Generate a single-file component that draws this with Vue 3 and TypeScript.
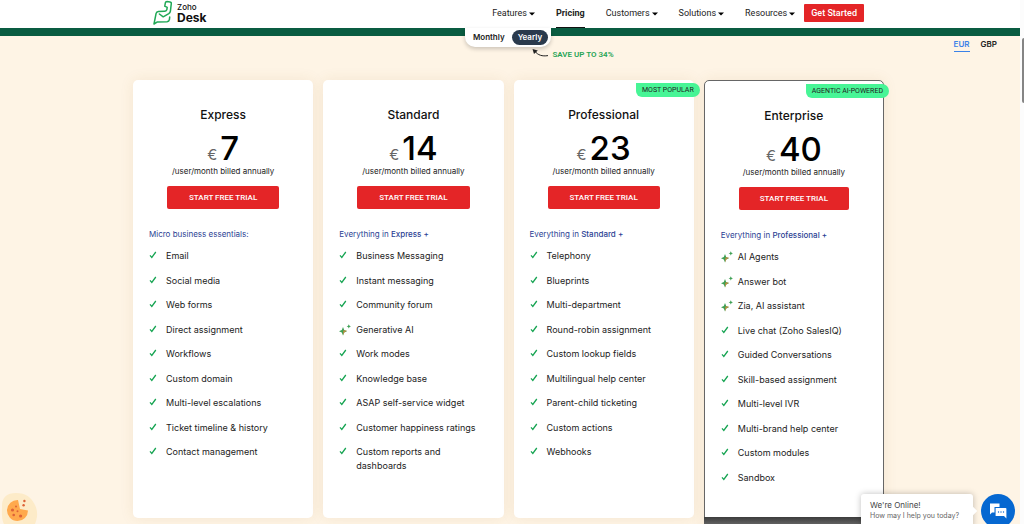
<script setup lang="ts">
import { ref } from 'vue'

interface Feature {
  label: string
  ai?: boolean
}

interface Plan {
  name: string
  price: Record<Currency, number>
  intro: string
  base?: string
  badge?: string
  highlighted?: boolean
  features: Feature[]
}

type Currency = 'EUR' | 'GBP'
type Billing = 'Monthly' | 'Yearly'

const currencies: Currency[] = ['EUR', 'GBP']
const billings: Billing[] = ['Monthly', 'Yearly']
const currency = ref<Currency>('EUR')
const billing = ref<Billing>('Yearly')

const links = [
  { label: 'Features', menu: true },
  { label: 'Pricing', menu: false },
  { label: 'Customers', menu: true },
  { label: 'Solutions', menu: true },
  { label: 'Resources', menu: true },
]

const list = (...labels: string[]): Feature[] => labels.map((label) => ({ label }))

const plans: Plan[] = [
  {
    name: 'Express',
    price: { EUR: 7, GBP: 6 },
    intro: 'Micro business essentials:',
    features: list(
      'Email',
      'Social media',
      'Web forms',
      'Direct assignment',
      'Workflows',
      'Custom domain',
      'Multi-level escalations',
      'Ticket timeline & history',
      'Contact management',
    ),
  },
  {
    name: 'Standard',
    price: { EUR: 14, GBP: 12 },
    intro: 'Everything in',
    base: 'Express +',
    features: [
      ...list('Business Messaging', 'Instant messaging', 'Community forum'),
      { label: 'Generative AI', ai: true },
      ...list(
        'Work modes',
        'Knowledge base',
        'ASAP self-service widget',
        'Customer happiness ratings',
        'Custom reports and dashboards',
      ),
    ],
  },
  {
    name: 'Professional',
    price: { EUR: 23, GBP: 20 },
    intro: 'Everything in',
    base: 'Standard +',
    badge: 'MOST POPULAR',
    features: list(
      'Telephony',
      'Blueprints',
      'Multi-department',
      'Round-robin assignment',
      'Custom lookup fields',
      'Multilingual help center',
      'Parent-child ticketing',
      'Custom actions',
      'Webhooks',
    ),
  },
  {
    name: 'Enterprise',
    price: { EUR: 40, GBP: 35 },
    intro: 'Everything in',
    base: 'Professional +',
    badge: 'AGENTIC AI-POWERED',
    highlighted: true,
    features: [
      { label: 'AI Agents', ai: true },
      { label: 'Answer bot', ai: true },
      { label: 'Zia, AI assistant', ai: true },
      ...list(
        'Live chat (Zoho SalesIQ)',
        'Guided Conversations',
        'Skill-based assignment',
        'Multi-level IVR',
        'Multi-brand help center',
        'Custom modules',
        'Sandbox',
      ),
    ],
  },
]
</script>

<template>
  <div class="page">
    <header class="header">
      <a class="logo" href="#">
        <svg class="logo-mark" viewBox="0 0 20 25" aria-hidden="true">
          <path
            d="M12.8 6.2 13.3 3Q13.6 1.6 15 1.6L18 1.9Q19.5 2.2 19.3 3.6L18.4 11.2Q18.2 12.8 16.8 13.7L11.2 16.8 7.4 14M12.8 6.2 15.2 7.4 14.8 9.8Q14.2 11.2 12.6 11.3L6.4 11.6Q4.5 11.8 4.1 13.4L2 24 5.4 21.9 15 21.7Q17 21.5 17.4 19.6L17.7 17"
          />
        </svg>
        <span class="logo-text"><small>Zoho</small><strong>Desk</strong></span>
      </a>
      <nav class="nav">
        <a
          v-for="link in links"
          :key="link.label"
          href="#"
          :class="['nav-link', { current: !link.menu }]"
        >
          {{ link.label }}
          <svg v-if="link.menu" class="caret" viewBox="0 0 6 4" aria-hidden="true">
            <path d="M0 0.4H6L3 3.6Z" />
          </svg>
        </a>
        <a class="get-started" href="#">Get Started</a>
      </nav>
    </header>

    <div class="band">
      <div class="toggle">
        <button
          v-for="b in billings"
          :key="b"
          type="button"
          :class="{ on: billing === b }"
          @click="billing = b"
        >
          {{ b }}
        </button>
      </div>
    </div>

    <main class="main">
      <div class="options">
        <p class="save">
          <svg viewBox="0 0 17 8" aria-hidden="true">
            <path class="arrow-line" d="M3 2.5C6 6 10 7.6 16 6.6" />
            <path d="M0.5 0 5.8 1.6 2 5Z" />
          </svg>
          SAVE UP TO 34%
        </p>
        <div class="currencies">
          <button
            v-for="c in currencies"
            :key="c"
            type="button"
            :class="{ on: currency === c }"
            @click="currency = c"
          >
            {{ c }}
          </button>
        </div>
      </div>

      <section class="plans">
        <article
          v-for="plan in plans"
          :key="plan.name"
          :class="['plan', { highlighted: plan.highlighted }]"
        >
          <span v-if="plan.badge" class="badge">{{ plan.badge }}</span>
          <h2>{{ plan.name }}</h2>
          <p class="price">
            <span>{{ currency === 'EUR' ? '€' : '£' }}</span>
            <b>{{ plan.price[currency] }}</b>
          </p>
          <p class="terms">/user/month billed annually</p>
          <a class="trial" href="#">START FREE TRIAL</a>
          <p class="intro">
            {{ plan.intro }} <b v-if="plan.base">{{ plan.base }}</b>
          </p>
          <ul>
            <li v-for="feature in plan.features" :key="feature.label">
              <svg v-if="feature.ai" class="spark" viewBox="0 0 12 12" aria-hidden="true">
                <path class="green" d="M4 3 5.2 6 8 7.2 5.2 8.4 4 11.4 2.8 8.4 0 7.2 2.8 6Z" />
                <path class="orange" d="M4.4 6.6H8L5.2 8.4 4 11.4Z" />
                <path class="green" d="M9.8 0.2 10.5 1.7 12 2.4 10.5 3.1 9.8 4.6 9.1 3.1 7.6 2.4 9.1 1.7Z" />
              </svg>
              <svg v-else class="check" viewBox="0 0 8 8" aria-hidden="true">
                <path d="M1 4.4 2.8 6.4 6.8 1" />
              </svg>
              <span>{{ feature.label }}</span>
            </li>
          </ul>
          <div v-if="plan.highlighted" class="plan-foot"></div>
        </article>
      </section>
    </main>

    <button class="cookie" type="button" aria-label="Cookie preferences">
      <svg viewBox="0 0 38 34" aria-hidden="true">
        <path
          class="blob"
          d="M2 14C2 5 7 1 16 1C26 1 31 5 35 13C38 19 38 26 34 34H5C1 28 2 20 2 14Z"
        />
        <path class="biscuit" d="M18 8A10.5 10.5 0 1 0 28 18.4L20 17Z" />
        <g class="chips">
          <circle cx="12.5" cy="18" r="1.6" />
          <circle cx="16" cy="14.5" r="1" />
          <circle cx="17.5" cy="19.3" r="1" />
          <circle cx="13.7" cy="23" r="1.3" />
          <circle cx="20.6" cy="24" r="1.6" />
          <circle cx="24.4" cy="9" r="1.2" />
          <circle cx="23.6" cy="13.2" r="1.2" />
        </g>
      </svg>
    </button>

    <aside class="chat">
      <div class="chat-note">
        <strong>We're Online!</strong>
        <span>How may I help you today?</span>
      </div>
      <button class="chat-button" type="button" aria-label="Open chat">
        <svg viewBox="0 0 18 16" aria-hidden="true">
          <path d="M1 0.5H10.5V4H5.5V9.5H3L1 11.5Z" />
          <path d="M6.6 5H16.6Q17.4 5 17.4 5.8V15.6L15 13H6.6Z" />
          <g class="dots">
            <circle cx="9.5" cy="9" r="0.7" />
            <circle cx="12" cy="9" r="0.7" />
            <circle cx="14.5" cy="9" r="0.7" />
          </g>
        </svg>
      </button>
    </aside>

    <div class="scrollbar" aria-hidden="true"><i></i></div>
  </div>
</template>

<style>
body {
  margin: 0;
}
</style>

<style scoped>
.page {
  position: relative;
  display: flex;
  flex-direction: column;
  box-sizing: border-box;
  height: 100vh;
  padding-right: 4px;
  overflow: hidden;
  background: #fef4e5;
  color: #222;
  font: 9px/1.5 Inter, 'Liberation Sans', sans-serif;
}
a {
  color: inherit;
  text-decoration: none;
}
button {
  border: 0;
  padding: 0;
  background: none;
  color: inherit;
  font: inherit;
  cursor: pointer;
}
p,
h2,
ul {
  margin: 0;
  padding: 0;
}
svg {
  display: block;
  flex: none;
}
.nav,
.save,
.badge,
.trial {
  font-family: Roboto, 'Liberation Sans', sans-serif;
}

.header {
  display: flex;
  justify-content: space-between;
  height: 28px;
  padding: 0 156px 0 152px;
  background: #fff;
}
.logo {
  display: flex;
  gap: 5px;
  color: #111;
}
.logo-mark {
  width: 20px;
  height: 25px;
}
.logo-mark path {
  fill: none;
  stroke: #1fa855;
  stroke-width: 1.5;
  stroke-linejoin: round;
  stroke-linecap: round;
}
.logo-text {
  display: flex;
  flex-direction: column;
  padding-top: 2px;
}
.logo-text small {
  font-size: 8px;
  font-weight: 500;
  line-height: 10px;
}
.logo-text strong {
  font-size: 12px;
  font-weight: 700;
  line-height: 12px;
}
.nav {
  display: flex;
  align-items: flex-start;
  gap: 21px;
}
.nav-link {
  display: flex;
  align-items: center;
  gap: 2px;
  box-sizing: border-box;
  height: 28px;
  border-bottom: 1px solid transparent;
}
.nav-link.current {
  border-color: #111;
  font-weight: 700;
}
.caret {
  width: 6px;
  height: 4px;
}
.get-started {
  margin: 4px 0 0 -12px;
  padding: 0 7px;
  border-radius: 1px;
  background: #e42527;
  color: #fff;
  font-weight: 500;
  line-height: 18px;
}

.band {
  display: flex;
  justify-content: center;
  flex: none;
  height: 8px;
  background: #0a5c41;
}
.toggle {
  position: relative;
  display: flex;
  align-items: center;
  height: 19px;
  margin-right: 4px;
  padding: 0 3px 0 8px;
  border-radius: 0 0 10px 10px;
  background: #fff;
  box-shadow: 0 2px 4px rgba(0, 0, 0, 0.2);
  font-size: 8px;
  font-weight: 600;
}
.toggle button {
  height: 15px;
  line-height: 15px;
}
.toggle button.on {
  margin-left: 7px;
  padding: 0 6px;
  border-radius: 8px;
  background: #2a3a4d;
  color: #fff;
}

.options {
  position: relative;
  display: flex;
  justify-content: center;
  height: 44px;
}
.save {
  display: flex;
  align-items: flex-start;
  gap: 3px;
  padding: 13px 0 0 126px;
  color: #27a556;
  font-size: 8px;
  font-weight: 600;
  line-height: 11px;
}
.save svg {
  width: 17px;
  height: 8px;
  fill: #222;
}
.save .arrow-line {
  fill: none;
  stroke: #222;
}
.currencies {
  position: absolute;
  top: 1px;
  right: 23px;
  display: flex;
  gap: 11px;
}
.currencies button {
  height: 15px;
  border-bottom: 1px solid transparent;
  font-size: 8px;
  font-weight: 600;
  line-height: 12px;
}
.currencies button.on {
  border-color: #3b82e8;
  color: #3b82e8;
}

.plans {
  display: grid;
  grid-template-columns: repeat(4, 1fr);
  gap: 10px;
  max-width: 751px;
  margin: 0 auto;
  padding-right: 3px;
}
.plan {
  position: relative;
  box-sizing: border-box;
  height: 438px;
  padding: 25px 16px 0;
  border-radius: 5px;
  background: #fff;
  box-shadow: 0 0 14px rgba(160, 110, 40, 0.1);
  text-align: center;
}
.plan.highlighted {
  display: flex;
  flex-direction: column;
  height: 480px;
  border: 1px solid #666;
}
.badge {
  position: absolute;
  top: 3px;
  right: -6px;
  padding: 0 6px;
  border-radius: 0 7px 7px 6px;
  background: #47f596;
  font-size: 7px;
  line-height: 14px;
  white-space: nowrap;
}
h2 {
  color: #111;
  font-size: 12px;
  font-weight: 500;
  line-height: 20px;
}
.price {
  display: flex;
  align-items: baseline;
  justify-content: center;
  gap: 3px;
  box-sizing: border-box;
  height: 39px;
  padding-top: 3px;
  color: #666;
  font-size: 15px;
  line-height: 40px;
}
.price b {
  color: #000;
  font-size: 33px;
  font-weight: 500;
}
.terms {
  font-size: 8px;
  line-height: 14px;
}
.trial {
  display: block;
  margin: 8px 18px 18px;
  border-radius: 2px;
  background: #e42527;
  color: #fff;
  font-size: 8px;
  font-weight: 500;
  line-height: 23px;
}
.intro {
  color: #2c3f94;
  font-size: 8px;
  line-height: 14px;
  text-align: left;
}
.intro b {
  font-weight: 500;
}
ul {
  padding-top: 8px;
  list-style: none;
  text-align: left;
}
li {
  display: grid;
  grid-template-columns: 17px 1fr;
  padding-bottom: 11px;
}
.check {
  width: 8px;
  height: 8px;
  margin-top: 2px;
}
.check path {
  fill: none;
  stroke: #16a452;
  stroke-width: 1.3;
}
.spark {
  width: 12px;
  height: 12px;
  margin-top: 1px;
}
.spark .green {
  fill: #3fa055;
}
.spark .orange {
  fill: #c98a3c;
}
.plan-foot {
  height: 42px;
  margin: auto -17px 0;
  border-radius: 0 0 5px 5px;
  background: linear-gradient(#3c3c3c, #666 8px);
}

.cookie {
  position: absolute;
  bottom: -2px;
  left: 0;
}
.cookie svg {
  width: 38px;
  height: 34px;
}
.blob {
  fill: #fdebc8;
}
.biscuit {
  fill: #ffa94d;
}
.chips {
  fill: #dd6238;
}

.chat {
  position: absolute;
  right: 9px;
  bottom: -4px;
  display: flex;
  align-items: flex-end;
  gap: 8px;
}
.chat-note {
  position: relative;
  display: flex;
  flex-direction: column;
  box-sizing: border-box;
  height: 34px;
  padding: 6px 14px 0 9px;
  border-radius: 3px;
  background: #fff;
  box-shadow: 0 0 6px rgba(0, 0, 0, 0.25);
  color: #666;
  font-size: 7px;
  line-height: 10px;
}
.chat-note::after {
  position: absolute;
  top: 14px;
  right: -3px;
  width: 6px;
  height: 6px;
  background: #fff;
  content: '';
  transform: rotate(45deg);
}
.chat-note strong {
  color: #444;
  font-size: 8px;
  font-weight: 400;
  line-height: 11px;
}
.chat-button {
  display: grid;
  place-items: center;
  width: 34px;
  height: 34px;
  border-radius: 50%;
  background: #0668d1;
}
.chat-button svg {
  width: 18px;
  height: 16px;
  fill: #fff;
}
.chat-button .dots {
  fill: #0668d1;
}

.scrollbar {
  position: absolute;
  top: 0;
  right: 0;
  bottom: 0;
  width: 4px;
  background: #fcfcfc;
}
.scrollbar i {
  display: block;
  height: 65px;
  margin: 38px 0 0 2px;
  border-radius: 2px 0 0 2px;
  background: #858585;
}
</style>
